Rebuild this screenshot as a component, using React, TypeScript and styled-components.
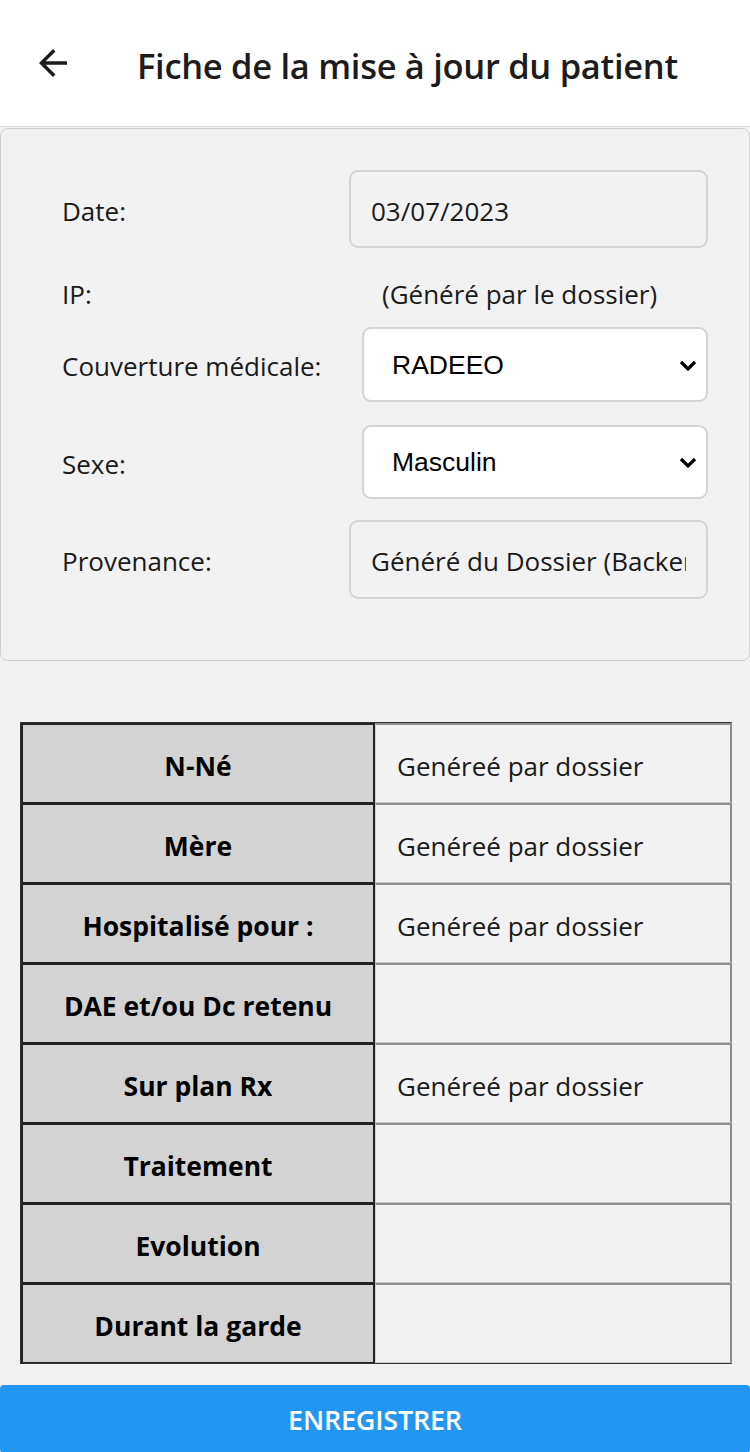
import React from "react";
import styled, { createGlobalStyle } from "styled-components";

const GlobalStyle = createGlobalStyle`
  html, body {
    margin: 0;
    padding: 0;
    background: #f2f2f2;
  }
  body {
    font-family: "Open Sans", "Noto Sans", sans-serif;
    color: #1a1a1a;
  }
  * { box-sizing: border-box; }
`;

const Page = styled.div`
  width: 750px;
  min-height: 1452px;
  background: #f2f2f2;
  display: flex;
  flex-direction: column;
`;

const Header = styled.header`
  height: 127px;
  background: #ffffff;
  border-bottom: 1px solid #d9d9d9;
  display: flex;
  align-items: center;
  padding-left: 31px;
`;

const BackButton = styled.button`
  width: 44px;
  height: 44px;
  padding: 0;
  margin: 0;
  border: none;
  background: transparent;
  display: flex;
  align-items: center;
  justify-content: center;
  cursor: pointer;
`;

const Title = styled.h1`
  margin: 4px 0 0 62px;
  font-family: "Open Sans", sans-serif;
  font-weight: 600;
  font-size: 34.5px;
  letter-spacing: -0.3px;
  color: #1c1c1c;
`;

const Panel = styled.section`
  margin-top: 1px;
  background: #f2f2f2;
  border: 1px solid #cfcfcf;
  border-radius: 8px;
  padding: 41px 41px 61px 61px;
  display: flex;
  flex-direction: column;
`;

const Row = styled.div<{ $mt: number; $h: number }>`
  display: flex;
  align-items: center;
  margin-top: ${(p) => p.$mt}px;
  height: ${(p) => p.$h}px;
`;

const Label = styled.label`
  width: 287px;
  flex-shrink: 0;
  padding-top: 3px;
  font-size: 26px;
  color: #1a1a1a;
`;

const ReadInput = styled.input`
  width: 359px;
  height: 100%;
  border: 2px solid #d4d4d4;
  border-radius: 9px;
  background: #f2f2f2;
  padding: 3px 20px 0;
  font-family: "Open Sans", sans-serif;
  font-size: 26px;
  color: #1a1a1a;
  outline: none;
`;

const StaticValue = styled.span`
  margin-left: 33px;
  padding-top: 3px;
  font-size: 26px;
  color: #1a1a1a;
`;

const SelectWrap = styled.div`
  position: relative;
  margin-left: 13px;
  width: 346px;
  height: 100%;
`;

const Select = styled.select`
  width: 100%;
  height: 100%;
  appearance: none;
  -webkit-appearance: none;
  background: #ffffff;
  border: 2px solid #d4d4d4;
  border-radius: 9px;
  padding: 0 28px;
  font-family: "Liberation Sans", Arial, sans-serif;
  font-size: 26.5px;
  color: #000000;
  outline: none;
`;

const Chevron = styled.svg`
  position: absolute;
  right: 9px;
  top: 50%;
  transform: translateY(-50%);
  pointer-events: none;
`;

const Table = styled.div`
  margin: 61px 0 0 20px;
  width: 712px;
  display: grid;
  grid-template-columns: 354px 357px;
  border: 1px solid #333333;
  border-right-color: #8c8c8c;
`;

const HeadCell = styled.div`
  height: 80px;
  background: #d3d3d3;
  border: 2px solid #232323;
  border-bottom-width: 1px;
  display: flex;
  align-items: center;
  justify-content: center;
  padding-top: 4px;
  font-family: "Open Sans", sans-serif;
  font-weight: 700;
  font-size: 26.5px;
  color: #000000;
`;

const ValueCell = styled.div`
  height: 80px;
  background: #f2f2f2;
  border-top: 2px solid #8f8f8f;
  border-right: 2px solid #8c8c8c;
  border-bottom: 1px solid #c4c4c4;
  border-left: 1px solid #d0d0d0;
  display: flex;
  align-items: center;
  padding: 4px 0 0 21px;
  font-size: 26px;
  color: #1a1a1a;
`;

const SaveButton = styled.button`
  margin-top: 21px;
  height: 68px;
  width: 750px;
  border: none;
  border-radius: 4px;
  background: #2196f3;
  color: #ffffff;
  font-family: "Open Sans", sans-serif;
  font-weight: 600;
  font-size: 27px;
  letter-spacing: -0.2px;
  text-transform: uppercase;
  cursor: pointer;
`;

const rows: { label: string; value: string }[] = [
  { label: "N-Né", value: "Genéreé par dossier" },
  { label: "Mère", value: "Genéreé par dossier" },
  { label: "Hospitalisé pour :", value: "Genéreé par dossier" },
  { label: "DAE et/ou Dc retenu", value: "" },
  { label: "Sur plan Rx", value: "Genéreé par dossier" },
  { label: "Traitement", value: "" },
  { label: "Evolution", value: "" },
  { label: "Durant la garde", value: "" },
];

const ChevronIcon = () => (
  <Chevron width="22" height="22" viewBox="0 0 22 22">
    <path d="M4 8 L11 15 L18 8" fill="none" stroke="#000" strokeWidth="3.2" />
  </Chevron>
);

export default function App() {
  return (
    <Page>
      <GlobalStyle />
      <Header>
        <BackButton aria-label="Retour">
          <svg width="42" height="42" viewBox="0 0 24 24">
            <path
              d="M20 11H7.83l5.59-5.59L12 4l-8 8 8 8 1.41-1.41L7.83 13H20v-2z"
              fill="#1c1c1c"
            />
          </svg>
        </BackButton>
        <Title>Fiche de la mise à jour du patient</Title>
      </Header>
      <Panel>
        <Row $mt={0} $h={78}>
          <Label>Date:</Label>
          <ReadInput readOnly value="03/07/2023" />
        </Row>
        <Row $mt={26} $h={36}>
          <Label>IP:</Label>
          <StaticValue>(Généré par le dossier)</StaticValue>
        </Row>
        <Row $mt={17} $h={75}>
          <Label>Couverture médicale:</Label>
          <SelectWrap>
            <Select defaultValue="RADEEO">
              <option>RADEEO</option>
              <option>CNOPS</option>
              <option>CNSS</option>
            </Select>
            <ChevronIcon />
          </SelectWrap>
        </Row>
        <Row $mt={23} $h={74}>
          <Label>Sexe:</Label>
          <SelectWrap>
            <Select defaultValue="Masculin">
              <option>Masculin</option>
              <option>Féminin</option>
            </Select>
            <ChevronIcon />
          </SelectWrap>
        </Row>
        <Row $mt={21} $h={79}>
          <Label>Provenance:</Label>
          <ReadInput readOnly value="Généré du Dossier (Backend)" />
        </Row>
      </Panel>
      <Table>
        {rows.map((r) => (
          <React.Fragment key={r.label}>
            <HeadCell>{r.label}</HeadCell>
            <ValueCell>{r.value}</ValueCell>
          </React.Fragment>
        ))}
      </Table>
      <SaveButton>Enregistrer</SaveButton>
    </Page>
  );
}
